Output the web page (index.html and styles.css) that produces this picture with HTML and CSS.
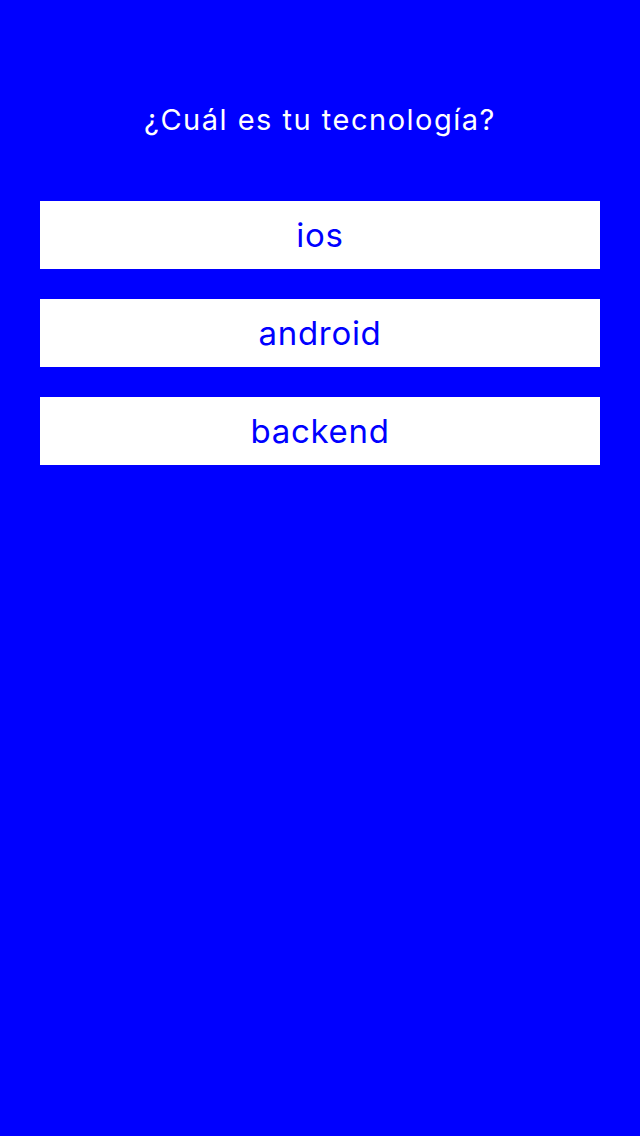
FILE: index.html
```html
<!DOCTYPE html>
<html lang="es">
<head>
<meta charset="utf-8">
<link rel="stylesheet" href="styles.css">
</head>
<body>
<main class="screen">
  <h1 class="title">¿Cuál es tu tecnología?</h1>
  <div class="options">
    <button class="option">ios</button>
    <button class="option">android</button>
    <button class="option">backend</button>
  </div>
</main>
</body>
</html>
```

FILE: styles.css
```css
html, body {
  margin: 0;
  padding: 0;
  background: #0000ff;
}
.screen {
  width: 640px;
  height: 1136px;
  box-sizing: border-box;
  padding: 100px 40px 0;
  display: flex;
  flex-direction: column;
  font-family: Inter, "Noto Sans", sans-serif;
}
.title {
  margin: 0;
  height: 40px;
  line-height: 40px;
  text-align: center;
  color: #ffffff;
  font-size: 29px;
  font-weight: 400;
  letter-spacing: 1.5px;
}
.options {
  margin-top: 61px;
  display: flex;
  flex-direction: column;
  gap: 30px;
}
.option {
  height: 68px;
  border: 0;
  margin: 0;
  padding: 0;
  background: #ffffff;
  color: #0000ff;
  font-family: Inter, "Noto Sans", sans-serif;
  font-size: 33px;
  font-weight: 400;
  line-height: 68px;
  letter-spacing: 0.7px;
  text-align: center;
}
```
